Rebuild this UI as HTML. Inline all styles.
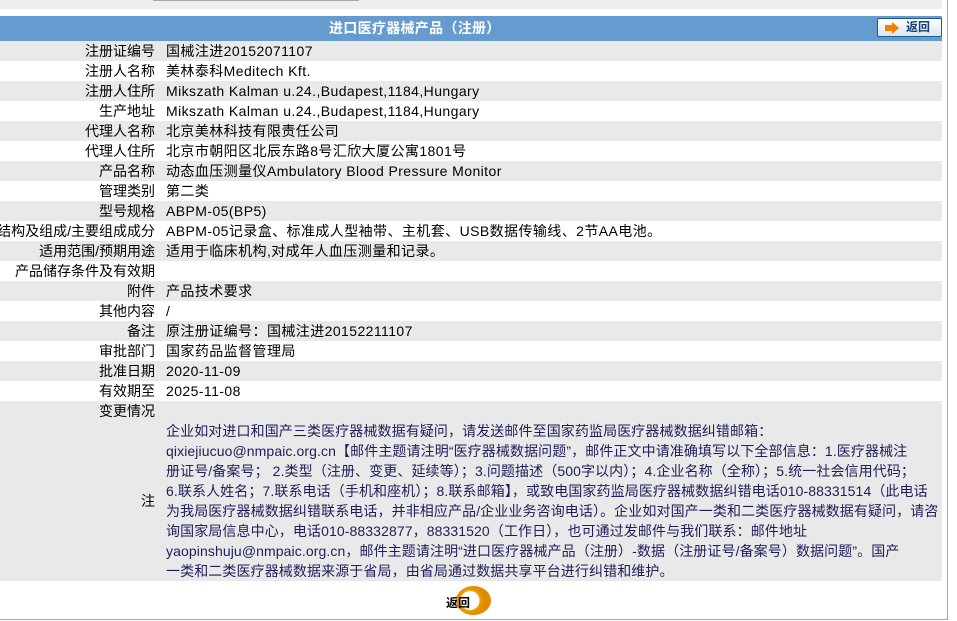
<!DOCTYPE html>
<html><head><meta charset="utf-8">
<style>
*{margin:0;padding:0;box-sizing:border-box}
body{width:957px;height:621px;overflow:hidden;background:#fff;font-family:"Liberation Sans","Noto Sans CJK SC",sans-serif;font-size:14px;color:#000;position:relative}
.top{position:absolute;left:0;top:0;width:942px;height:9px;background:#eeeeee}
.topline{position:absolute;left:153px;top:0;width:206px;height:1px;background:#aaa}
.vline{position:absolute;left:947px;top:0;width:1px;height:620px;background:#aaa}
.bline{position:absolute;left:0;top:619px;width:948px;height:1px;background:#aaa}
.hdr{position:absolute;left:0;top:16px;width:942px;height:25px;background:#659bce;color:#fff;font-weight:bold;line-height:25px;font-size:14px}
.hdr span{position:absolute;left:329px;top:0;letter-spacing:0.3px}
.btn{position:absolute;left:877px;top:18px;width:65px;height:19px;border:1px solid #1d5a9a;border-radius:2px;background:linear-gradient(#fff,#dde4ec);color:#10407a;font-weight:bold;font-size:12px;line-height:17px;text-align:left}
.row{position:absolute;left:0;width:942px;height:20px;line-height:20px;white-space:nowrap}
.g{background:#e9e9e9}
.l{position:absolute;right:787px;top:0;text-align:right}
.v{position:absolute;left:166px;top:0;letter-spacing:0.42px}
.note{position:absolute;left:0;top:421px;width:942px;height:160px;background:#e9e9e9}
.note .t{position:absolute;left:166px;top:0;line-height:20px;color:#1e1e5a;white-space:nowrap;letter-spacing:0.1px}
.note .l{top:70px}
.back{position:absolute;left:446px;top:594px;font-weight:bold;font-size:12px}
.circ{position:absolute;left:456px;top:586px;width:35px;height:29px;border-radius:50%;background:radial-gradient(circle at 40% 50%,#fff 0 9px,#f0a000 10px,#e08a00 14px)}
</style></head><body>
<div class="top"></div><div class="topline"></div>
<div class="vline"></div><div class="bline"></div>
<div class="hdr"><span>进口医疗器械产品（注册）</span></div>
<div class="btn"><svg style="position:absolute;left:7px;top:3px" width="14" height="12"><path d="M0 3h7V0l7 6-7 6V9H0z" fill="#f08000"/></svg><span style="position:absolute;left:28px;top:0">返回</span></div>

<div class="row g" style="top:41px"><span class="l">注册证编号</span><span class="v">国械注进20152071107</span></div>
<div class="row" style="top:61px"><span class="l">注册人名称</span><span class="v">美林泰科Meditech Kft.</span></div>
<div class="row g" style="top:81px"><span class="l">注册人住所</span><span class="v">Mikszath Kalman u.24.,Budapest,1184,Hungary</span></div>
<div class="row" style="top:101px"><span class="l">生产地址</span><span class="v">Mikszath Kalman u.24.,Budapest,1184,Hungary</span></div>
<div class="row g" style="top:121px"><span class="l">代理人名称</span><span class="v">北京美林科技有限责任公司</span></div>
<div class="row" style="top:141px"><span class="l">代理人住所</span><span class="v">北京市朝阳区北辰东路8号汇欣大厦公寓1801号</span></div>
<div class="row g" style="top:161px"><span class="l">产品名称</span><span class="v">动态血压测量仪Ambulatory Blood Pressure Monitor</span></div>
<div class="row" style="top:181px"><span class="l">管理类别</span><span class="v">第二类</span></div>
<div class="row g" style="top:201px"><span class="l">型号规格</span><span class="v">ABPM-05(BP5)</span></div>
<div class="row" style="top:221px"><span class="l">结构及组成/主要组成成分</span><span class="v">ABPM-05记录盒、标准成人型袖带、主机套、USB数据传输线、2节AA电池。</span></div>
<div class="row g" style="top:241px"><span class="l">适用范围/预期用途</span><span class="v">适用于临床机构,对成年人血压测量和记录。</span></div>
<div class="row" style="top:261px"><span class="l">产品储存条件及有效期</span><span class="v"></span></div>
<div class="row g" style="top:281px"><span class="l">附件</span><span class="v">产品技术要求</span></div>
<div class="row" style="top:301px"><span class="l">其他内容</span><span class="v">/</span></div>
<div class="row g" style="top:321px"><span class="l">备注</span><span class="v">原注册证编号：国械注进20152211107</span></div>
<div class="row" style="top:341px"><span class="l">审批部门</span><span class="v">国家药品监督管理局</span></div>
<div class="row g" style="top:361px"><span class="l">批准日期</span><span class="v">2020-11-09</span></div>
<div class="row" style="top:381px"><span class="l">有效期至</span><span class="v">2025-11-08</span></div>
<div class="row g" style="top:401px"><span class="l">变更情况</span><span class="v"></span></div>
<div class="note"><span class="l">注</span><div class="t">企业如对进口和国产三类医疗器械数据有疑问，请发送邮件至国家药监局医疗器械数据纠错邮箱：<br>qixiejiucuo@nmpaic.org.cn【邮件主题请注明“医疗器械数据问题”，邮件正文中请准确填写以下全部信息：1.医疗器械注<br>册证号/备案号； 2.类型（注册、变更、延续等）；3.问题描述（500字以内）；4.企业名称（全称）；5.统一社会信用代码；<br>6.联系人姓名；7.联系电话（手机和座机）；8.联系邮箱】，或致电国家药监局医疗器械数据纠错电话010-88331514（此电话<br>为我局医疗器械数据纠错联系电话，并非相应产品/企业业务咨询电话）。企业如对国产一类和二类医疗器械数据有疑问，请咨<br>询国家局信息中心，电话010-88332877，88331520（工作日），也可通过发邮件与我们联系：邮件地址<br>yaopinshuju@nmpaic.org.cn，邮件主题请注明“进口医疗器械产品（注册）-数据（注册证号/备案号）数据问题”。国产<br>一类和二类医疗器械数据来源于省局，由省局通过数据共享平台进行纠错和维护。</div></div>
<div class="circ"></div>
<div class="back">返回</div>
</body></html>
